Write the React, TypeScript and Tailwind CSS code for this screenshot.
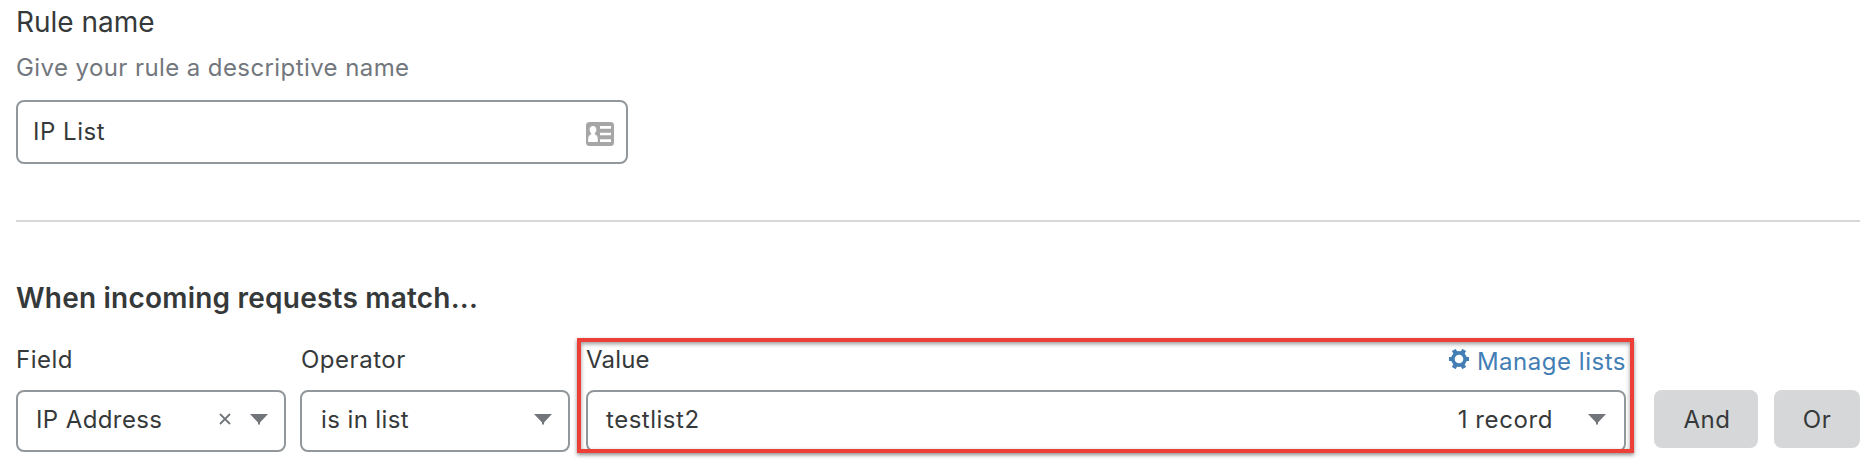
import React from "react";

function Caret() {
  return (
    <svg width="18" height="11" viewBox="0 0 18 11" className="-mt-px shrink-0" fill="#72767b">
      <path d="M0 0H18L10 8.6V10.5H8V8.6Z" />
    </svg>
  );
}

function ClearIcon() {
  return (
    <svg width="12" height="12" viewBox="0 0 12 12" className="-mt-0.5 shrink-0" stroke="#72767b" strokeWidth="1.8">
      <path d="M1 1L11 11M11 1L1 11" />
    </svg>
  );
}

function ContactCardIcon() {
  return (
    <svg width="28" height="24" viewBox="0 0 28 24" className="shrink-0">
      <rect width="28" height="24" rx="3.5" fill="#a6a6a6" />
      <path
        fill="#fff"
        d="M7 4C9.1 4 10.4 5.5 10.4 7.6C10.4 9.2 9.8 10.4 8.8 11.2V12.3C10.8 13 11.8 14.7 11.8 17V20H2.2V17C2.2 14.7 3.2 13 5.2 12.3V11.2C4.2 10.4 3.6 9.2 3.6 7.6C3.6 5.5 4.9 4 7 4Z"
      />
      <path stroke="#fff" strokeWidth="2.6" d="M14 5.4H25M14 12H25M14 18.6H25" />
    </svg>
  );
}

function GearIcon() {
  return (
    <svg width="20" height="20" viewBox="-10 -10 20 20" className="-mt-0.5 shrink-0" fill="#437eb4">
      <path
        fillRule="evenodd"
        d="M-7.9 0A7.9 7.9 0 1 0 7.9 0A7.9 7.9 0 1 0 -7.9 0ZM-4.3 0A4.3 4.3 0 1 1 4.3 0A4.3 4.3 0 1 1 -4.3 0Z"
      />
      <path d="M-10 -2.1H-6.5V2.1H-10ZM6.5 -2.1H10V2.1H6.5Z" />
      <path transform="rotate(60)" d="M-10.4 -2.2H-6.5V2.2H-10.4ZM6.5 -2.2H10.4V2.2H6.5Z" />
      <path transform="rotate(120)" d="M-10.4 -2.2H-6.5V2.2H-10.4ZM6.5 -2.2H10.4V2.2H6.5Z" />
    </svg>
  );
}

const box = "flex h-[62px] items-center rounded-lg border-2 border-[#92979b] bg-white pb-0.5 pl-[18px] pr-4";

export default function App() {
  return (
    <main className="h-[465px] overflow-hidden bg-white pl-4 pr-1.5 pt-[6px] font-[Inter,'Liberation_Sans',sans-serif] text-2xl leading-8 tracking-[0.52px] text-[#36393a]">
      <section>
        <h2 className="text-[28px] leading-8 tracking-[0px]">Rule name</h2>
        <p className="mt-3.5 tracking-[0.41px] text-[#72777d]">Give your rule a descriptive name</p>
        <div className="mt-4 flex h-16 w-[612px] items-center justify-between rounded-lg border-2 border-[#92979b] pl-[15px] pr-3">
          <span>IP List</span>
          <span className="mt-1">
            <ContactCardIcon />
          </span>
        </div>
      </section>

      <hr className="mt-14 border-0 border-t-2 border-[#d5d7d8]" />

      <section className="mt-[60px]">
        <h3 className="text-[28px] font-semibold leading-8 tracking-[0.22px]">When incoming requests match...</h3>
        <div className="mt-[30px] flex items-start">
          <div className="w-[270px]">
            <div className="mb-3.5">Field</div>
            <div className={box}>
              <span className="flex-1 tracking-[0.4px]">IP Address</span>
              <ClearIcon />
              <span className="ml-[19px] flex">
                <Caret />
              </span>
            </div>
          </div>

          <div className="ml-3.5 w-[270px]">
            <div className="mb-3.5 pl-px">Operator</div>
            <div className={box}>
              <span className="flex-1 pl-px tracking-[0.4px]">is in list</span>
              <Caret />
            </div>
          </div>

          <div className="relative ml-4 w-[1040px]">
            <div className="mb-3.5 flex justify-between">
              <span className="tracking-[0.2px]">Value</span>
              <a className="flex h-8 items-center text-[#437eb4]">
                <GearIcon />
                <span className="ml-2 mt-1">Manage lists</span>
              </a>
            </div>
            <div className={box}>
              <span className="flex-1">testlist2</span>
              <span className="tracking-[0.6px]">1 record</span>
              <span className="ml-[35px] mr-0.5 flex">
                <Caret />
              </span>
            </div>
            <div className="absolute -left-[9px] -right-2 -top-[6px] h-[115px] border-4 border-[#ec3f37] shadow-[0_2px_4px_rgba(0,0,0,0.45),inset_0_2px_4px_rgba(0,0,0,0.4)]" />
          </div>

          <button className="ml-7 mt-[46px] h-[58px] w-[104px] rounded-lg bg-[#d5d7d8] pl-0.5 pt-0.5">And</button>
          <button className="ml-4 mt-[46px] h-[58px] w-[86px] rounded-lg bg-[#d5d7d8] pt-0.5">Or</button>
        </div>
      </section>
    </main>
  );
}
